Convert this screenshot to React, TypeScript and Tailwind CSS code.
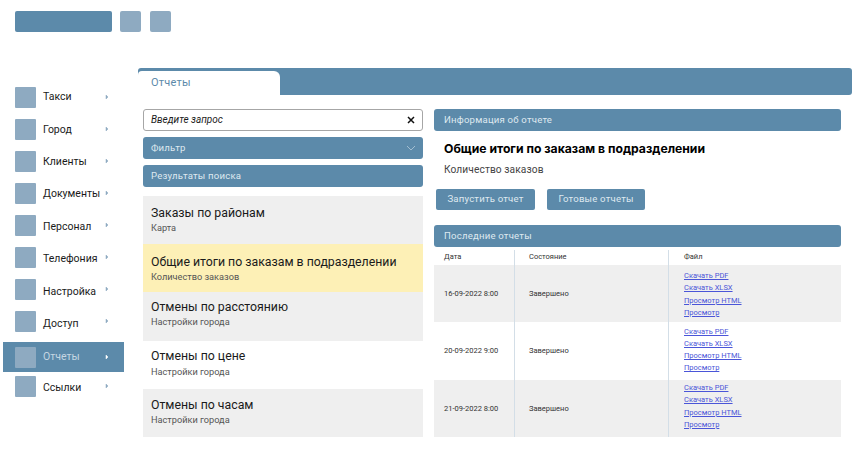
const menu = [
  { label: "Такси", shift: "translate-y-0" },
  { label: "Город", shift: "translate-y-[1px]" },
  { label: "Клиенты", shift: "translate-y-[1px]" },
  { label: "Документы", shift: "translate-y-[1px]" },
  { label: "Персонал", shift: "translate-y-[2px]" },
  { label: "Телефония", shift: "translate-y-[2px]" },
  { label: "Настройка", shift: "translate-y-[3px]" },
  { label: "Доступ", shift: "translate-y-[3px]" },
];

const results = [
  { title: "Заказы по районам", sub: "Карта", bg: "bg-[#efefef]", pad: "pt-[8px]", gap: "mt-0" },
  { title: "Общие итоги по заказам в подразделении", sub: "Количество заказов", bg: "bg-[#fdf0b6]", pad: "pt-[9px]", gap: "mt-0" },
  { title: "Отмены по расстоянию", sub: "Настройки города", bg: "bg-[#efefef]", pad: "pt-[6px]", gap: "mt-0" },
  { title: "Отмены по цене", sub: "Настройки города", bg: "bg-white", pad: "pt-[6px]", gap: "mt-[1px]" },
  { title: "Отмены по часам", sub: "Настройки города", bg: "bg-[#efefef]", pad: "pt-[7px]", gap: "mt-0" },
];

const reports = [
  { date: "16-09-2022 8:00", bg: "bg-[#efefef]", h: "h-[57px]", files: "pt-[2px]" },
  { date: "20-09-2022 9:00", bg: "bg-white", h: "h-[58px]", files: "pb-[2px]" },
  { date: "21-09-2022 8:00", bg: "bg-[#efefef]", h: "h-[57px]", files: "pb-[4px]" },
];

const links = ["Скачать PDF", "Скачать XLSX", "Просмотр HTML", "Просмотр"];

const Bar = ({ text, className = "" }: { text: string; className?: string }) => (
  <div className={`h-[22px] rounded-[3px] bg-[#5c8aaa] flex items-center px-[8px] pb-[0.5px] text-[9.6px] tracking-[0.2px] text-[#dfe9f0] ${className}`}>
    {text}
  </div>
);

const MenuItem = ({ label, className, shift = "translate-y-0", active = false }: { label: string; className: string; shift?: string; active?: boolean }) => (
  <div className={`flex items-center ml-[3px] w-[121px] pl-[12px] ${className}`}>
    <div className="w-[21px] h-[21px] rounded-[1px] bg-[#8eaac1] shrink-0" />
    <span className={`ml-[7px] w-[62px] text-[10.5px] whitespace-nowrap ${shift}`}>{label}</span>
    <svg width="4" height="6" viewBox="0 0 4 6" className={active ? "text-white" : "text-[#8eaac1]"}>
      <path d="M1 1l2 2-2 2z" fill="currentColor" stroke="currentColor" strokeWidth="0.5" />
    </svg>
  </div>
);

export default function App() {
  return (
    <div className="w-[858px] h-[453px] overflow-hidden bg-white font-['Roboto',sans-serif]">
      <div className="h-[68px] pt-[11px] pl-[15px] flex items-start">
        <div className="w-[97px] h-[21px] rounded-[2px] bg-[#5c8aaa]" />
        <div className="w-[21px] h-[21px] rounded-[2px] bg-[#8eaac1] ml-[8px]" />
        <div className="w-[21px] h-[21px] rounded-[2px] bg-[#8eaac1] ml-[9px]" />
      </div>

      <div className="flex">
        <nav className="w-[138px] pt-[13px] shrink-0">
          {menu.map((item) => (
            <MenuItem key={item.label} label={item.label} shift={item.shift} className="h-[32px] text-[#1a1a1a]" />
          ))}
          <MenuItem label="Отчеты" active className="h-[30px] mt-[5px] bg-[#5c8aaa] text-[#c5d6e2]" />
          <MenuItem label="Ссылки" shift="translate-y-[2px]" className="h-[28px] text-[#1a1a1a]" />
        </nav>

        <main className="w-[714px] shrink-0">
          <div className="h-[27px] rounded-[3px] bg-[#5c8aaa] flex items-end">
            <div className="w-[142px] h-[24px] pt-[1px] rounded-tl-[4px] rounded-tr-[6px] bg-white flex items-center pl-[13px] text-[11px] tracking-[0.2px] text-[#5c8aaa]">
              Отчеты
            </div>
          </div>

          <div className="flex pt-[14px] pl-[5px]">
            <section className="w-[280px] flex flex-col shrink-0">
              <div className="h-[22px] pb-[1px] rounded-[3px] border border-[#a6a6a6] flex items-center justify-between pl-[7px] pr-[7px] text-[10px] italic text-[#1c1c1c]">
                Введите запрос
                <svg width="8" height="8" viewBox="0 0 8 8">
                  <path d="M1 1l6 6M7 1L1 7" stroke="#111" strokeWidth="1.5" />
                </svg>
              </div>
              <div className="relative mt-[6px]">
                <Bar text="Фильтр" />
                <svg width="10" height="6" viewBox="0 0 10 6" className="absolute right-[7px] top-[8px]">
                  <path d="M1 1l4 4 4-4" fill="none" stroke="#b5cbdb" strokeWidth="0.8" />
                </svg>
              </div>
              <Bar text="Результаты поиска" className="mt-[6px]" />
              <div className="mt-[9px] flex flex-col">
                {results.map((r) => (
                  <div key={r.title} className={`h-[48.2px] px-[8px] ${r.bg} ${r.pad}`}>
                    <div className="text-[12.3px] leading-[18px] text-[#1a1a1a] whitespace-nowrap">{r.title}</div>
                    <div className={`text-[9.2px] leading-[12px] text-[#555] ${r.gap}`}>{r.sub}</div>
                  </div>
                ))}
              </div>
            </section>

            <section className="w-[407px] ml-[11px] shrink-0">
              <Bar text="Информация об отчете" className="px-[10px]" />
              <h1 className="mt-[9px] pl-[10px] text-[12.2px] leading-[18px] font-bold font-['Inter',sans-serif] text-black whitespace-nowrap">
                Общие итоги по заказам в подразделении
              </h1>
              <p className="mt-[5px] pl-[10px] text-[10.2px] leading-[14px] tracking-[0.1px] text-[#444]">Количество заказов</p>
              <div className="flex gap-[12px] mt-[12px] ml-[2px]">
                <button className="w-[99px] h-[21px] pb-[1px] rounded-[2px] bg-[#5c8aaa] text-[9.6px] tracking-[0.2px] text-[#dfe9f0]">Запустить отчет</button>
                <button className="w-[98px] h-[21px] pb-[1px] rounded-[2px] bg-[#5c8aaa] text-[9.6px] tracking-[0.2px] text-[#dfe9f0]">Готовые отчеты</button>
              </div>
              <Bar text="Последние отчеты" className="mt-[15px] h-[21px] px-[10px]" />

              <div className="mt-[3px] grid grid-cols-[81px_154px_172px] text-[7.5px] text-[#333]">
                <div className="h-[15px] pl-[10px] pb-[2px] flex items-center border-r border-[#d3dee7]">Дата</div>
                <div className="h-[15px] pl-[14px] pb-[2px] flex items-center border-r border-[#d3dee7]">Состояние</div>
                <div className="h-[15px] pl-[15px] pb-[2px] flex items-center">Файл</div>
                {reports.map((r) => (
                  <div key={r.date} className="contents">
                    <div className={`${r.h} ${r.bg} pl-[10px] flex items-center border-r border-[#d3dee7]`}>{r.date}</div>
                    <div className={`${r.h} ${r.bg} pl-[14px] flex items-center border-r border-[#d3dee7]`}>Завершено</div>
                    <div className={`${r.h} ${r.bg} ${r.files} pl-[15px] flex flex-col justify-center gap-[2.2px]`}>
                      {links.map((l) => (
                        <a key={l} href="#" className="leading-[10px] text-[#4a55d8] underline">{l}</a>
                      ))}
                    </div>
                  </div>
                ))}
              </div>
            </section>
          </div>
        </main>
      </div>
    </div>
  );
}
